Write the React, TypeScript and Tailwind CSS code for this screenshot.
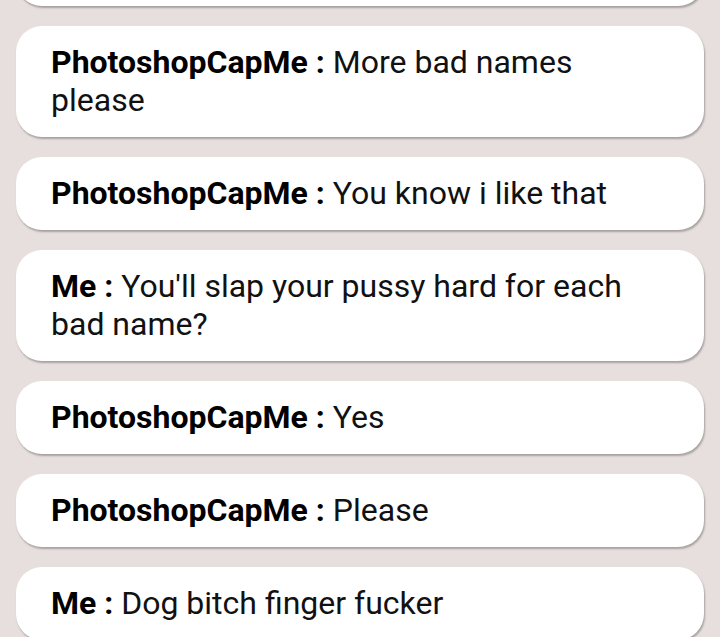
const messages = [
  { from: "PhotoshopCapMe", text: "Please" },
  { from: "PhotoshopCapMe", text: "More bad names please" },
  { from: "PhotoshopCapMe", text: "You know i like that" },
  { from: "Me", text: "You'll slap your pussy hard for each bad name?" },
  { from: "PhotoshopCapMe", text: "Yes" },
  { from: "PhotoshopCapMe", text: "Please" },
  { from: "Me", text: "Dog bitch finger fucker" },
]

function Bubble(props: { from: string; text: string }) {
  return (
    <div className="bg-white rounded-[26px] pl-[35px] pr-[40px] pt-[17px] pb-[18px] shadow-[1px_2px_2px_rgba(0,0,0,0.28)]">
      <p className="text-[32px] leading-[38px] text-[#111]">
        <span className="font-bold text-black">{props.from} :</span> {props.text}
      </p>
    </div>
  )
}

export default function App() {
  return (
    <div
      className="w-[720px] h-[637px] overflow-hidden bg-[#e7dfde]"
      style={{ fontFamily: "Roboto, 'Liberation Sans', sans-serif" }}
    >
      <div className="flex flex-col gap-[20px] px-[16px] mt-[-67px]">
        {messages.map((m, i) => (
          <Bubble key={i} from={m.from} text={m.text} />
        ))}
      </div>
    </div>
  )
}
